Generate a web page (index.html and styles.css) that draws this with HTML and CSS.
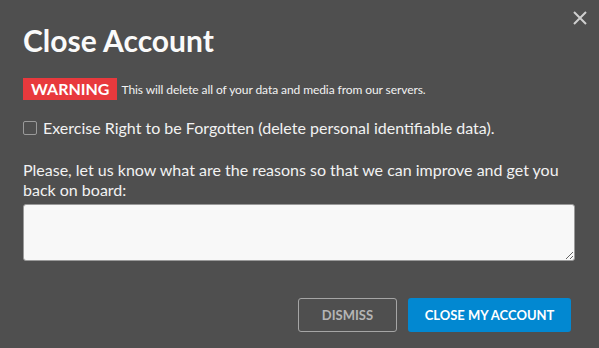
FILE: index.html
```html
<!DOCTYPE html>
<html lang="en">
<head>
    <meta charset="UTF-8">
    <title>Close Account</title>
    <link rel="stylesheet" href="styles.css">
</head>
<body>
    <div class="modal">
        <!-- Close icon -->
        <button class="close-x" aria-label="Close">
            <svg width="14" height="14" viewBox="0 0 14 14">
                <path d="M1 1 L13 13 M13 1 L1 13" stroke="#cfcfcf" stroke-width="2" fill="none"/>
            </svg>
        </button>

        <h1>Close Account</h1>

        <p class="warning-line">
            <span class="warning">WARNING</span>
            This will delete all of your data and media from our servers.
        </p>

        <label class="forget">
            <span class="box"></span>
            Exercise Right to be Forgotten (delete personal identifiable data).
        </label>

        <p class="reason">Please, let us know what are the reasons so that we can improve and get you back on board:</p>
        <textarea class="reason-input"></textarea>

        <div class="actions">
            <button class="dismiss">Dismiss</button>
            <button class="confirm">Close My Account</button>
        </div>
    </div>
</body>
</html>
```

FILE: styles.css
```css
body {
    margin: 0;
    padding: 0;
    background-color: #4f4f4f;
    font-family: 'Lato', 'Noto Sans', sans-serif;
    color: #f2f2f2;
}
.modal {
    position: relative;
    padding: 20px 24px 16px 23px;
}
.close-x {
    position: absolute;
    top: 11px;
    right: 12px;
    background: none;
    border: none;
    padding: 0;
    cursor: pointer;
}
h1 {
    margin: 0;
    font-size: 30px;
    font-weight: 700;
    color: #fafafa;
    line-height: 40px;
}
.warning-line {
    margin: 18px 0 0;
    display: flex;
    align-items: center;
    font-size: 12px;
    letter-spacing: -0.08px;
}
.warning {
    background-color: #e8393d;
    color: #fff;
    font-size: 16px;
    font-weight: 700;
    padding: 0 8px;
    height: 22px;
    line-height: 22px;
    margin-right: 4px;
    letter-spacing: 0;
}
.forget {
    display: flex;
    align-items: center;
    margin-top: 18px;
    font-size: 16px;
}
.box {
    width: 12px;
    height: 12px;
    border: 1px solid #9a9a9a;
    border-radius: 2px;
    margin-right: 6px;
}
.reason {
    margin: 23px 0 0;
    font-size: 16px;
    line-height: 20px;
}
.reason-input {
    display: block;
    box-sizing: border-box;
    width: 552px;
    height: 57px;
    margin-top: 4px;
    background-color: #f8f8f8;
    border: 1px solid #9a9a9a;
    border-radius: 3px;
    resize: vertical;
}
.actions {
    display: flex;
    justify-content: flex-end;
    gap: 11px;
    margin-top: 37px;
    padding-right: 4px;
}
.actions button {
    height: 34px;
    font-family: 'Lato', sans-serif;
    font-size: 13px;
    font-weight: 700;
    text-transform: uppercase;
    border-radius: 3px;
    cursor: pointer;
}
.dismiss {
    width: 99px;
    background: none;
    border: 1px solid #a5a5a5;
    color: #b5b5b5;
}
.confirm {
    width: 163px;
    background-color: #0288d1;
    border: none;
    color: #fff;
}
```
